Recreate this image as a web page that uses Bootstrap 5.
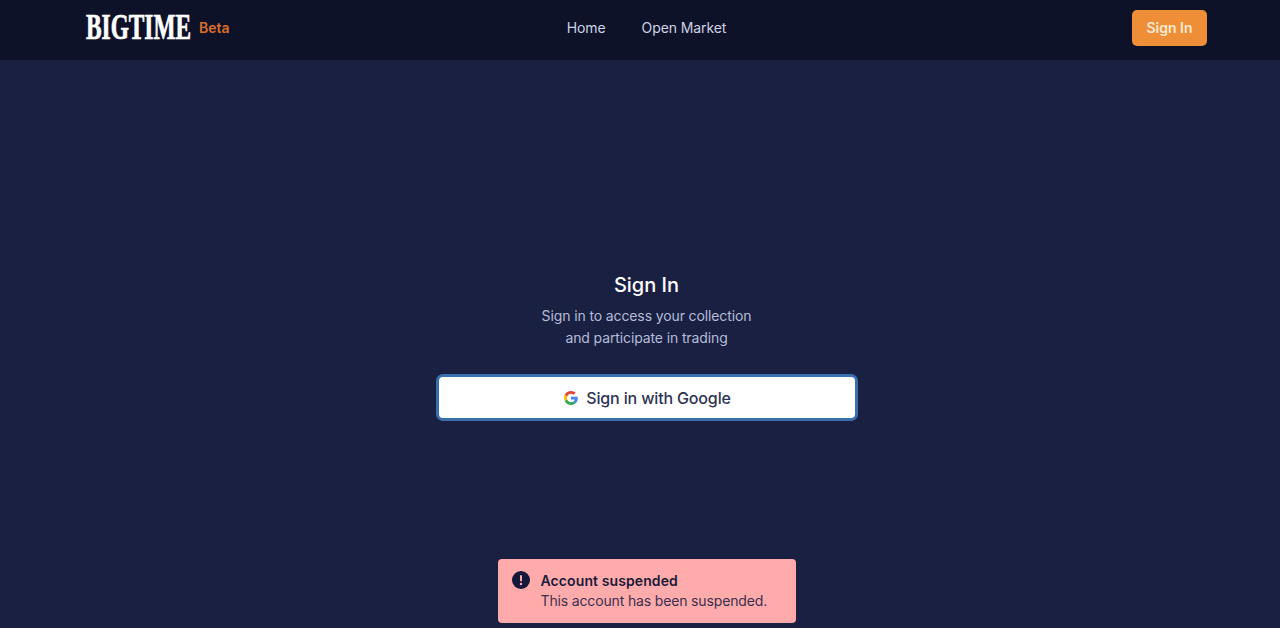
<!DOCTYPE html>
<html lang="en">
<head>
    <meta charset="UTF-8" />
    <meta name="viewport" content="width=device-width, initial-scale=1" />
    <title>Sign In</title>
    <link href="https://cdn.jsdelivr.net/npm/bootstrap@5.3.0/dist/css/bootstrap.min.css" rel="stylesheet"/>
    <style>
        body { background: #1a2042; font-family: Inter, "Liberation Sans", sans-serif; height: 628px; overflow: hidden; }
        .top-bar { height: 60px; background: #0e1229; padding: 0 73px 4px 86px; }
        .top-side { width: 240px; }
        .logo-svg { overflow: visible; }
        .logo-text { font-family: "Liberation Serif", serif; font-weight: 700; font-size: 24px; fill: #fff; stroke: #fff; stroke-width: .5px; }
        .beta-tag { color: #d96f28; font-size: 14px; font-weight: 600; margin-bottom: 2px; }
        .top-link { color: #cdd2e4; font-size: 14px; letter-spacing: -.1px; text-decoration: none; }
        .top-links { gap: 36px; margin-bottom: 2px; }
        .top-btn { background: #ee8f38; border: 0; color: #ffe9d2; font-size: 14px; font-weight: 600; width: 75px; height: 36px; padding: 0 0 2px; border-radius: 5px; }
        .signin-main { height: 568px; padding: 0 0 0 13px; }
        .signin-box { width: 422px; margin-top: 4px; }
        .signin-title { color: #fff; font-size: 20px; font-weight: 500; line-height: 28px; margin: 0 0 6px; }
        .signin-text { color: #b4bcd8; font-size: 14px; letter-spacing: -.12px; line-height: 22px; margin: 0 0 25px; }
        .google-btn { background: #fff; color: #2d3354; border: 3px solid #3a6fae; border-radius: 7px; height: 47px; padding-left: 14px; font-size: 16px; letter-spacing: -.15px; font-weight: 500; }
        .toast-wrap { bottom: 5px; left: 13px; right: 0; }
        .suspend-toast { width: 298px; height: 64px; background: #ffabab; border-radius: 4px; color: #1a1f3d; font-size: 14px; padding: 12px 14px; line-height: 20px; }
        .suspend-body { margin-left: 3px; }
        .suspend-title { font-weight: 600; letter-spacing: .1px; color: #1a1a3a; }
        .suspend-msg { color: #3a3050; letter-spacing: -.15px; }
    </style>
</head>
<body>
<header class="top-bar d-flex align-items-center justify-content-between">
    <div class="top-side d-flex align-items-center gap-2">
        <svg class="logo-svg" width="105" height="28" viewBox="0 0 105 28" role="img" aria-label="Big Time">
            <text class="logo-text" x="0" y="17.200" transform="scale(1 1.450)" textLength="105" lengthAdjust="spacingAndGlyphs">BIGTIME</text>
        </svg>
        <span class="beta-tag">Beta</span>
    </div>
    <nav class="d-flex top-links">
        <a class="top-link" href="#">Home</a>
        <a class="top-link" href="#">Open Market</a>
    </nav>
    <div class="top-side d-flex justify-content-end">
        <button class="btn top-btn" type="button">Sign In</button>
    </div>
</header>

<main class="signin-main d-flex align-items-center justify-content-center">
    <div class="signin-box text-center">
        <h1 class="signin-title">Sign In</h1>
        <p class="signin-text">Sign in to access your collection<br>and participate in trading</p>
        <button class="btn google-btn w-100 d-flex align-items-center justify-content-center gap-2" type="button">
            <svg width="14" height="14" viewBox="0 0 48 48" aria-hidden="true">
                <path fill="#EA4335" d="M24 9.500c3.500 0 6.700 1.200 9.200 3.600l6.900-6.900C35.900 2.400 30.500 0 24 0 14.600 0 6.500 5.400 2.600 13.200l8 6.200C12.500 13.600 17.800 9.500 24 9.500z"/>
                <path fill="#4285F4" d="M47 24.500c0-1.600-.1-3.100-.4-4.500H24v9h12.900c-.6 3-2.200 5.500-4.700 7.200l7.700 6c4.500-4.200 7.100-10.300 7.100-17.700z"/>
                <path fill="#FBBC05" d="M10.600 28.600c-.5-1.400-.8-3-.8-4.600s.3-3.200.8-4.600l-8-6.200C.9 16.500 0 20.100 0 24s.9 7.500 2.600 10.800l8-6.200z"/>
                <path fill="#34A853" d="M24 48c6.500 0 11.900-2.100 15.900-5.800l-7.700-6c-2.200 1.400-4.900 2.300-8.200 2.300-6.200 0-11.500-4.100-13.400-9.900l-8 6.200C6.500 42.600 14.600 48 24 48z"/>
            </svg>
            <span>Sign in with Google</span>
        </button>
    </div>
</main>

<div class="toast-wrap position-fixed d-flex justify-content-center">
    <div class="suspend-toast d-flex gap-2">
        <svg class="flex-shrink-0" width="18" height="18" viewBox="0 0 18 18" aria-hidden="true">
            <circle cx="9" cy="9" r="9" fill="#14183a"/>
            <rect x="8" y="4" width="2" height="6.500" rx="1" fill="#ffabab"/>
            <circle cx="9" cy="13" r="1.200" fill="#ffabab"/>
        </svg>
        <div class="suspend-body">
            <div class="suspend-title">Account suspended</div>
            <div class="suspend-msg">This account has been suspended.</div>
        </div>
    </div>
</div>
</body>
</html>
